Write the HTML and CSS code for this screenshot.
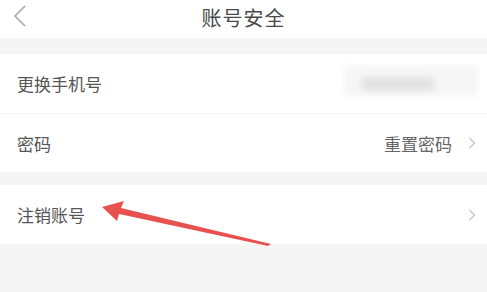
FILE: index.html
```html
<!DOCTYPE html>
<html lang="zh-CN">

<head>
    <meta charset="UTF-8">
    <meta name="viewport" content="width=device-width, initial-scale=1.0">
    <title>账号安全</title>
    <link rel="stylesheet" href="styles.css">
</head>

<body>
    <header class="top-bar">
        <a class="back" href="#">
            <svg width="16" height="22" viewBox="0 0 16 22">
                <path d="M13 1 L3 11 L13 21" fill="none" stroke="#a8a8a8" stroke-width="1.6" />
            </svg>
        </a>
        <h1>账号安全</h1>
    </header>

    <div class="group">
        <div class="row">
            <span class="label">更换手机号</span>
            <span class="phone"><span class="phone-inner"></span></span>
        </div>
        <div class="row">
            <span class="label">密码</span>
            <span class="value">重置密码</span>
            <span class="chevron">
                <svg width="8" height="12" viewBox="0 0 8 12">
                    <path d="M1.5 1 L6.5 6 L1.5 11" fill="none" stroke="#c4c4c4" stroke-width="1.4" />
                </svg>
            </span>
        </div>
    </div>

    <div class="group">
        <div class="row">
            <span class="label">注销账号</span>
            <span class="chevron">
                <svg width="8" height="12" viewBox="0 0 8 12">
                    <path d="M1.5 1 L6.5 6 L1.5 11" fill="none" stroke="#c4c4c4" stroke-width="1.4" />
                </svg>
            </span>
        </div>
    </div>

    <!-- annotation arrow drawn over the page -->
    <svg class="arrow" width="487" height="292" viewBox="0 0 487 292">
        <polygon points="102,207 124,201 121,208 271,244 268,246 119,214 117,221" fill="#e9514f" />
    </svg>
</body>

</html>
```

FILE: styles.css
```css
* {
    margin: 0;
    padding: 0;
    box-sizing: border-box;
}

body {
    font-family: "Noto Sans CJK SC", "Noto Sans", sans-serif;
    background: #f5f5f5;
    color: #555;
    width: 487px;
    height: 292px;
    overflow: hidden;
    position: relative;
}

/* Top bar */
.top-bar {
    height: 38px;
    background: #fff;
    display: flex;
    align-items: center;
    justify-content: center;
    position: relative;
}

.back {
    position: absolute;
    left: 12px;
    top: 5px;
}

.top-bar h1 {
    font-size: 20px;
    font-weight: normal;
    color: #4a4a4a;
    letter-spacing: 1px;
    margin-top: -4px;
}

/* Groups */
.group {
    background: #fff;
    margin-top: 16px;
}

.group + .group {
    margin-top: 13px;
}

.row {
    height: 59px;
    display: flex;
    align-items: center;
    padding: 0 9px 0 17px;
    font-size: 17px;
}

.row + .row {
    border-top: 1px solid #f2f2f2;
}

.label {
    flex: 1;
    color: #555;
}

.value {
    color: #666;
    margin-right: 16px;
}

.chevron {
    display: flex;
    width: 10px;
}

/* blurred phone number */
.phone {
    width: 134px;
    height: 30px;
    background: #f6f6f6;
    filter: blur(3px);
    display: flex;
    align-items: center;
    padding-left: 18px;
    margin-top: -6px;
}

.phone-inner {
    width: 72px;
    height: 14px;
    background: #e2e2e2;
    margin-top: 6px;
}

.arrow {
    position: absolute;
    top: 0;
    left: 0;
    pointer-events: none;
}
```
